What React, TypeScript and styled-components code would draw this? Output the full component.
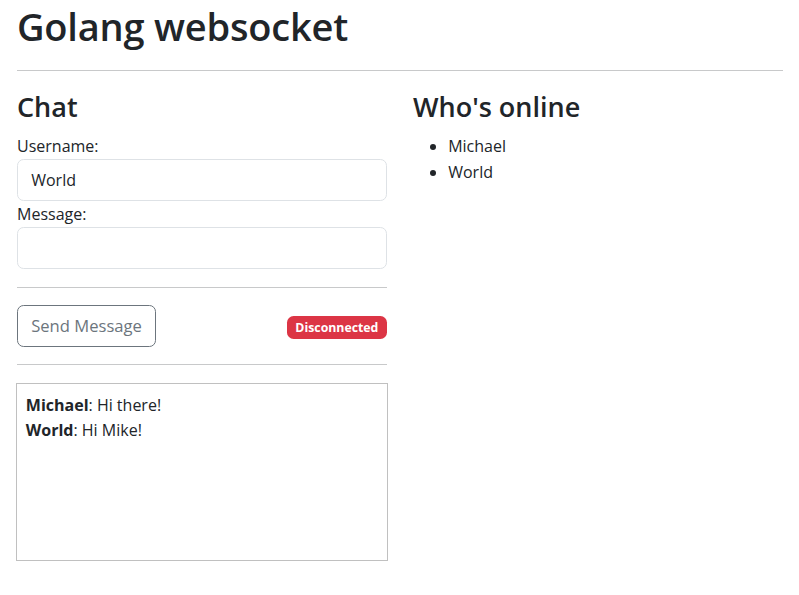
import React from "react";
import styled, { createGlobalStyle } from "styled-components";

const GlobalStyle = createGlobalStyle`
  html, body { margin: 0; padding: 0; background: #fff; }
  body {
    font-family: "Open Sans", "Noto Sans", "Liberation Sans", sans-serif;
    font-size: 16px;
    line-height: 26.4px;
    color: #212529;
  }
  * { box-sizing: border-box; }
`;

const Page = styled.div`
  padding: 0 16px 0 17px;
`;

const Title = styled.h1`
  margin: 0 0 8.8px;
  font-size: 38px;
  font-weight: 600;
  line-height: 52.8px;
  letter-spacing: -0.2px;
`;

const Rule = styled.hr`
  margin: 17.6px 0;
  border: 0;
  border-top: 1px solid #c8c9ca;
  height: 0;
`;

const Row = styled.div`
  display: grid;
  grid-template-columns: 370px 1fr;
  column-gap: 26px;
`;

const Column = styled.div`
  min-width: 0;
`;

const SectionTitle = styled.h3`
  margin: 0 0 7px;
  font-size: 27px;
  font-weight: 600;
  line-height: 36.96px;
`;

const Label = styled.label`
  display: block;
  line-height: 26.4px;
`;

const Input = styled.input`
  display: block;
  width: 100%;
  height: 41.6px;
  padding: 6.6px 13.2px;
  font: inherit;
  color: #212529;
  background: #fff;
  border: 1px solid #dee2e6;
  border-radius: 6.6px;
  outline: none;
`;

const Actions = styled.div`
  display: flex;
  justify-content: space-between;
  align-items: baseline;
`;

const OutlineButton = styled.button`
  font: inherit;
  font-size: 16.6px;
  color: #6c757d;
  background: transparent;
  border: 1px solid #6c757d;
  border-radius: 6.6px;
  padding: 6.6px 13.2px;
  line-height: 26.4px;
  cursor: pointer;
`;

const Badge = styled.span<{ $tone: string }>`
  display: inline-block;
  background: ${(p) => p.$tone};
  color: #fff;
  font-size: 12.3px;
  font-weight: 700;
  line-height: 13.2px;
  padding: 4.6px 8.6px;
  border-radius: 6.6px;
`;

const Output = styled.div`
  margin: 0 -1px;
  height: 178px;
  border: 1px solid #c0c0c0;
  padding: 8.8px;
`;

const Line = styled.div`
  line-height: 25.5px;
`;

const Who = styled.ul`
  margin: 0 0 17.6px;
  padding-left: 35.2px;
`;

const messages = [
  { from: "Michael", text: "Hi there!" },
  { from: "World", text: "Hi Mike!" },
];

export default function App() {
  return (
    <>
      <GlobalStyle />
      <Page>
        <Title>Golang websocket</Title>
        <Rule />
        <Row>
          <Column>
            <SectionTitle>Chat</SectionTitle>
            <Label htmlFor="username">Username:</Label>
            <Input id="username" defaultValue="World" />
            <Label htmlFor="message">Message:</Label>
            <Input id="message" />
            <Rule />
            <Actions>
              <OutlineButton>Send Message</OutlineButton>
              <Badge $tone="#dc3545">Disconnected</Badge>
            </Actions>
            <Rule />
            <Output>
              {messages.map((m) => (
                <Line key={m.from}>
                  <strong>{m.from}</strong>: {m.text}
                </Line>
              ))}
            </Output>
          </Column>
          <Column>
            <SectionTitle>Who's online</SectionTitle>
            <Who>
              <li>Michael</li>
              <li>World</li>
            </Who>
          </Column>
        </Row>
      </Page>
    </>
  );
}
